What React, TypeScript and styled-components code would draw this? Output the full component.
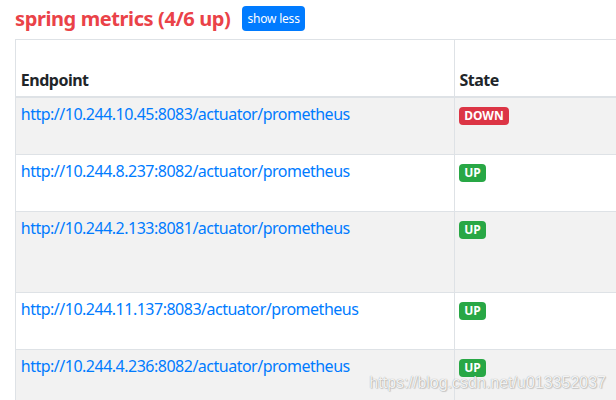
import React from "react";
import styled, { createGlobalStyle } from "styled-components";

const Global = createGlobalStyle`
  html, body { margin: 0; padding: 0; background: #fff; }
  body {
    font-family: "Noto Sans", "Open Sans", sans-serif;
    font-size: 16px;
    line-height: 24px;
    letter-spacing: -0.5px;
    color: #212529;
    overflow: hidden;
    width: 616px;
    height: 400px;
  }
`;

const Page = styled.div`
  position: relative;
  width: 616px;
  height: 400px;
  overflow: hidden;
  padding-left: 15px;
  padding-top: 6px;
  box-sizing: border-box;
`;

const TitleBar = styled.div`
  display: flex;
  align-items: center;
  gap: 12px;
  height: 25px;
  margin-bottom: 8px;
`;

const Title = styled.a`
  font-size: 20px;
  font-weight: 700;
  letter-spacing: -0.4px;
  color: #ea4248;
  line-height: 24px;
  text-decoration: none;
`;

const ToggleButton = styled.button`
  height: 25px;
  padding: 0 5px;
  border: none;
  border-radius: 4px;
  background: #007bff;
  color: #fff;
  font-family: inherit;
  font-size: 12px;
  letter-spacing: -0.2px;
  line-height: 25px;
`;

const Table = styled.table`
  border-collapse: collapse;
  width: 900px;
  border-top: 1px solid #dee2e6;
  border-left: 1px solid #dee2e6;
`;

const HeadCell = styled.th<{ $w?: number }>`
  text-align: left;
  vertical-align: bottom;
  font-weight: 700;
  height: 48px;
  padding: 4px 4.8px;
  border-right: 1px solid #dee2e6;
  border-bottom: 2px solid #dee2e6;
  width: ${(p) => (p.$w ? `${p.$w}px` : "auto")};
`;

const Row = styled.tr<{ $striped: boolean }>`
  background: ${(p) => (p.$striped ? "#f2f2f2" : "#fff")};
`;

const Cell = styled.td<{ $lines: number }>`
  vertical-align: top;
  height: ${(p) => p.$lines * 24}px;
  padding: 4px 4.8px;
  border-right: 1px solid #dee2e6;
  border-bottom: 1px solid #dee2e6;
`;

const Link = styled.a`
  color: #007bff;
  text-decoration: none;
`;

const Badge = styled.span<{ $up: boolean }>`
  display: inline-block;
  padding: 3px 4.8px;
  font-size: 12px;
  font-weight: 700;
  letter-spacing: 0;
  line-height: 1;
  color: #fff;
  border-radius: 4px;
  background: ${(p) => (p.$up ? "#28a745" : "#dc3545")};
`;

const Watermark = styled.div`
  position: absolute;
  right: 10px;
  bottom: 8px;
  font-family: "Liberation Sans", Arial, sans-serif;
  font-size: 16px;
  letter-spacing: 0;
  line-height: 18px;
  color: rgba(255, 255, 255, 0.9);
  text-shadow: 0 0 1px rgba(0, 0, 0, 0.4), 1px 1px 1px rgba(0, 0, 0, 0.15);
  pointer-events: none;
`;

const rows = [
  { url: "http://10.244.10.45:8083/actuator/prometheus", up: false, lines: 2 },
  { url: "http://10.244.8.237:8082/actuator/prometheus", up: true, lines: 2 },
  { url: "http://10.244.2.133:8081/actuator/prometheus", up: true, lines: 3 },
  { url: "http://10.244.11.137:8083/actuator/prometheus", up: true, lines: 2 },
  { url: "http://10.244.4.236:8082/actuator/prometheus", up: true, lines: 2 },
];

export default function App() {
  return (
    <>
      <Global />
      <Page>
        <TitleBar>
          <Title href="#">spring metrics (4/6 up)</Title>
          <ToggleButton>show less</ToggleButton>
        </TitleBar>
        <Table>
          <thead>
            <tr>
              <HeadCell $w={428}>Endpoint</HeadCell>
              <HeadCell>State</HeadCell>
            </tr>
          </thead>
          <tbody>
            {rows.map((r, i) => (
              <Row key={r.url} $striped={i % 2 === 0}>
                <Cell $lines={r.lines}>
                  <Link href="#">{r.url}</Link>
                </Cell>
                <Cell $lines={r.lines}>
                  <Badge $up={r.up}>{r.up ? "UP" : "DOWN"}</Badge>
                </Cell>
              </Row>
            ))}
          </tbody>
        </Table>
        <Watermark>https://blog.csdn.net/u013352037</Watermark>
      </Page>
    </>
  );
}
